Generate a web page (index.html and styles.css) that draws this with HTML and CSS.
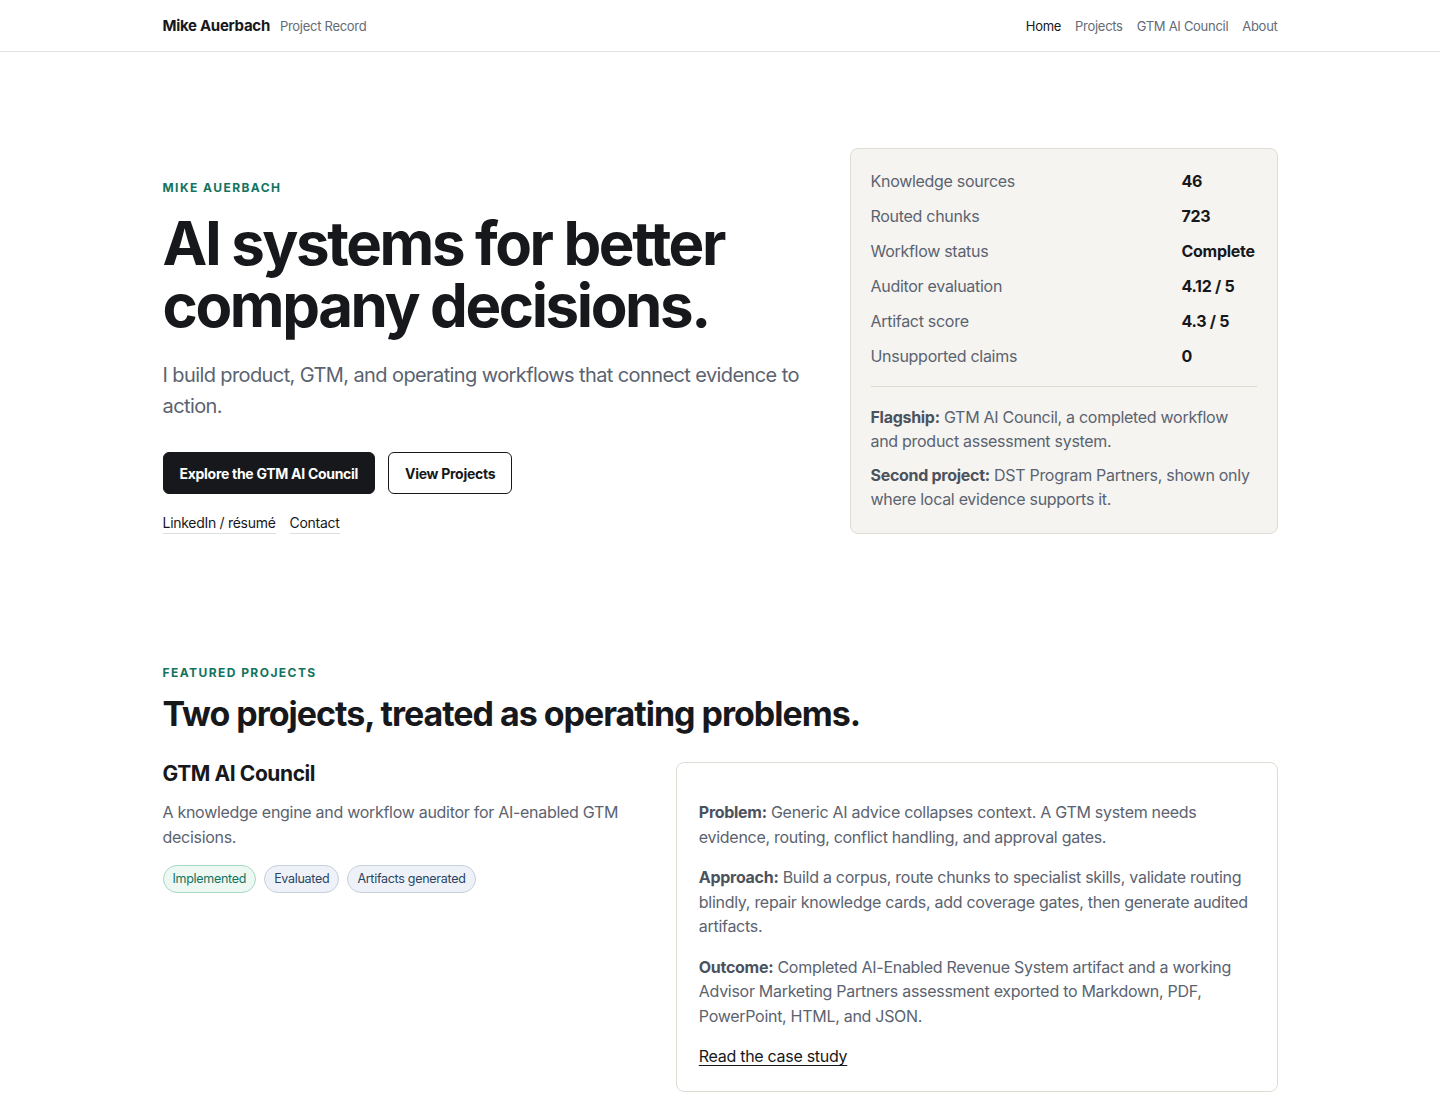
FILE: index.html
```html
<!DOCTYPE html>
<html lang="en">
<head>
    <meta charset="UTF-8"/>
    <meta name="viewport" content="width=device-width, initial-scale=1.0"/>
    <title>Mike Auerbach — Project Record</title>
    <link rel="stylesheet" href="styles.css">
</head>
<body>
<header class="site-header">
    <div class="container header-inner">
        <a class="brand" href="#">
            <span class="brand-name">Mike Auerbach</span>
            <span class="brand-sub">Project Record</span>
        </a>
        <nav class="nav">
            <a href="#" class="active">Home</a>
            <a href="#">Projects</a>
            <a href="#">GTM AI Council</a>
            <a href="#">About</a>
        </nav>
    </div>
</header>

<main>
    <section class="hero">
        <div class="container hero-grid">
            <div class="hero-copy">
                <p class="eyebrow">Mike Auerbach</p>
                <h1>AI systems for better company decisions.</h1>
                <p class="lead">I build product, GTM, and operating workflows that connect evidence to action.</p>
                <div class="actions">
                    <a href="#" class="btn btn-dark">Explore the GTM AI Council</a>
                    <a href="#" class="btn btn-outline">View Projects</a>
                </div>
                <div class="text-links">
                    <a href="#">LinkedIn / résumé</a>
                    <a href="#">Contact</a>
                </div>
            </div>
            <aside class="stats-card">
                <dl class="stats">
                    <dt>Knowledge sources</dt><dd>46</dd>
                    <dt>Routed chunks</dt><dd>723</dd>
                    <dt>Workflow status</dt><dd>Complete</dd>
                    <dt>Auditor evaluation</dt><dd>4.12 / 5</dd>
                    <dt>Artifact score</dt><dd>4.3 / 5</dd>
                    <dt>Unsupported claims</dt><dd>0</dd>
                </dl>
                <div class="stats-notes">
                    <p><strong>Flagship:</strong> GTM AI Council, a completed workflow and product assessment system.</p>
                    <p><strong>Second project:</strong> DST Program Partners, shown only where local evidence supports it.</p>
                </div>
            </aside>
        </div>
    </section>

    <section class="projects">
        <div class="container">
            <p class="eyebrow">Featured projects</p>
            <h2>Two projects, treated as operating problems.</h2>

            <article class="project">
                <div class="project-intro">
                    <h3>GTM AI Council</h3>
                    <p>A knowledge engine and workflow auditor for AI-enabled GTM decisions.</p>
                    <ul class="tags">
                        <li class="tag tag-green">Implemented</li>
                        <li class="tag">Evaluated</li>
                        <li class="tag">Artifacts generated</li>
                    </ul>
                </div>
                <div class="project-card">
                    <p><strong>Problem:</strong> Generic AI advice collapses context. A GTM system needs evidence, routing, conflict handling, and approval gates.</p>
                    <p><strong>Approach:</strong> Build a corpus, route chunks to specialist skills, validate routing blindly, repair knowledge cards, add coverage gates, then generate audited artifacts.</p>
                    <p><strong>Outcome:</strong> Completed AI-Enabled Revenue System artifact and a working Advisor Marketing Partners assessment exported to Markdown, PDF, PowerPoint, HTML, and JSON.</p>
                    <p><a href="#" class="read-link">Read the case study</a></p>
                </div>
            </article>

            <article class="project">
                <div class="project-intro">
                    <h3>DST Program Partners</h3>
                    <p>Program and partner operations, documented only where local evidence supports it.</p>
                    <ul class="tags">
                        <li class="tag">Documented</li>
                    </ul>
                </div>
                <div class="project-card">
                    <p><strong>Problem:</strong> Partner programs drift without a shared record of commitments and results.</p>
                    <p><strong>Approach:</strong> Collect the available evidence and describe only what it supports.</p>
                    <p><a href="#" class="read-link">Read the project notes</a></p>
                </div>
            </article>
        </div>
    </section>
</main>
</body>
</html>
```

FILE: styles.css
```css
* {
    margin: 0;
    padding: 0;
    box-sizing: border-box;
}

html {
    overflow-y: scroll;
}

html body {
    font-family: Inter, "Noto Sans", sans-serif;
    font-size: 16px;
    letter-spacing: -0.018em;
    color: #17181b;
    background-color: #fff;
}

a {
    color: inherit;
    text-decoration: none;
}

.container {
    max-width: 1115px;
    margin: 0 auto;
}

/* header */

.site-header {
    border-bottom: 1px solid #e3e3e3;
}

.header-inner {
    height: 51px;
    display: flex;
    align-items: center;
    justify-content: space-between;
}

.brand {
    display: flex;
    align-items: baseline;
    gap: 10px;
}

.brand-name {
    font-size: 15px;
    font-weight: 700;
}

.brand-sub {
    font-size: 13px;
    color: #646b76;
}

.nav {
    display: flex;
    gap: 14px;
    font-size: 13px;
}

.nav a {
    color: #646b76;
}

.nav a.active {
    color: #17181b;
}

/* hero */

.hero {
    padding: 96px 0 0;
}

.hero-grid {
    display: grid;
    grid-template-columns: minmax(0, 1fr) 428px;
    gap: 40px;
    align-items: end;
}

.eyebrow {
    font-size: 12px;
    font-weight: 700;
    letter-spacing: 0.12em;
    text-transform: uppercase;
    color: #13735e;
    line-height: 16px;
}

.hero h1 {
    margin-top: 16px;
    font-size: 60px;
    line-height: 62px;
    font-weight: 700;
    letter-spacing: -0.04em;
    max-width: 600px;
}

.lead {
    margin-top: 24px;
    font-size: 20px;
    line-height: 31px;
    color: #5b6370;
    letter-spacing: -0.03em;
}

.actions {
    display: flex;
    gap: 13px;
    margin-top: 30px;
}

.btn {
    display: inline-flex;
    align-items: center;
    height: 42px;
    padding: 0 16px;
    border-radius: 6px;
    font-size: 14px;
    font-weight: 700;
    border: 1px solid #17181b;
}

.btn-dark {
    background-color: #17181b;
    color: #fff;
}

.btn-outline {
    background-color: #fff;
    color: #17181b;
}

.text-links {
    display: flex;
    gap: 14px;
    margin-top: 20px;
    font-size: 14px;
}

.text-links a {
    padding-bottom: 1px;
    border-bottom: 1px solid #dcdee2;
    line-height: 18px;
}

.stats-card {
    background-color: #f5f4f0;
    border: 1px solid #dfdcd4;
    border-radius: 8px;
    padding: 20px 20px 22px;
}

.stats {
    display: grid;
    grid-template-columns: 1fr auto;
    column-gap: 24px;
    row-gap: 11px;
    font-size: 16px;
    line-height: 24px;
}

.stats dt {
    color: #5b6370;
}

.stats dd {
    font-weight: 700;
    color: #17181b;
    min-width: 75px;
}

.stats-notes {
    margin-top: 18px;
    padding-top: 18px;
    border-top: 1px solid #dcd9d1;
}

.stats-notes p {
    font-size: 16px;
    line-height: 24px;
    color: #5b6370;
}

.stats-notes p + p {
    margin-top: 10px;
}

.stats-notes strong,
.project-card strong {
    color: #4b525d;
}

/* projects */

.projects {
    padding: 131px 0 80px;
}

.projects h2 {
    margin-top: 12px;
    font-size: 34px;
    line-height: 42px;
    font-weight: 700;
    letter-spacing: -0.03em;
}

.project {
    display: grid;
    grid-template-columns: 0.8fr 1fr;
    gap: 32px;
    margin-top: 24px;
}

.project + .project {
    margin-top: 48px;
}

.project-intro h3 {
    font-size: 21px;
    line-height: 30px;
    font-weight: 700;
    letter-spacing: -0.02em;
}

.project-intro p {
    margin-top: 11px;
    font-size: 16px;
    line-height: 25px;
    color: #5b6370;
}

.tags {
    list-style: none;
    display: flex;
    flex-wrap: wrap;
    gap: 8px;
    margin-top: 15px;
}

.tag {
    font-size: 12.5px;
    line-height: 16px;
    padding: 5px 9px;
    border-radius: 999px;
    border: 1px solid #c6cfdc;
    background-color: #eef2f8;
    color: #2b4462;
}

.tag-green {
    border-color: #a8d8c5;
    background-color: #edf8f3;
    color: #13735e;
}

.project-card {
    margin-top: 3px;
    border: 1px solid #dfdcd4;
    border-radius: 8px;
    padding: 21px 22px 22px;
}

.project-card p {
    margin: 16px 0;
    font-size: 16px;
    line-height: 24.5px;
    color: #5b6370;
}

.project-card p:last-child {
    margin-bottom: 0;
}

.read-link {
    color: #17181b;
    text-decoration: underline;
    text-underline-offset: 3px;
}
```
